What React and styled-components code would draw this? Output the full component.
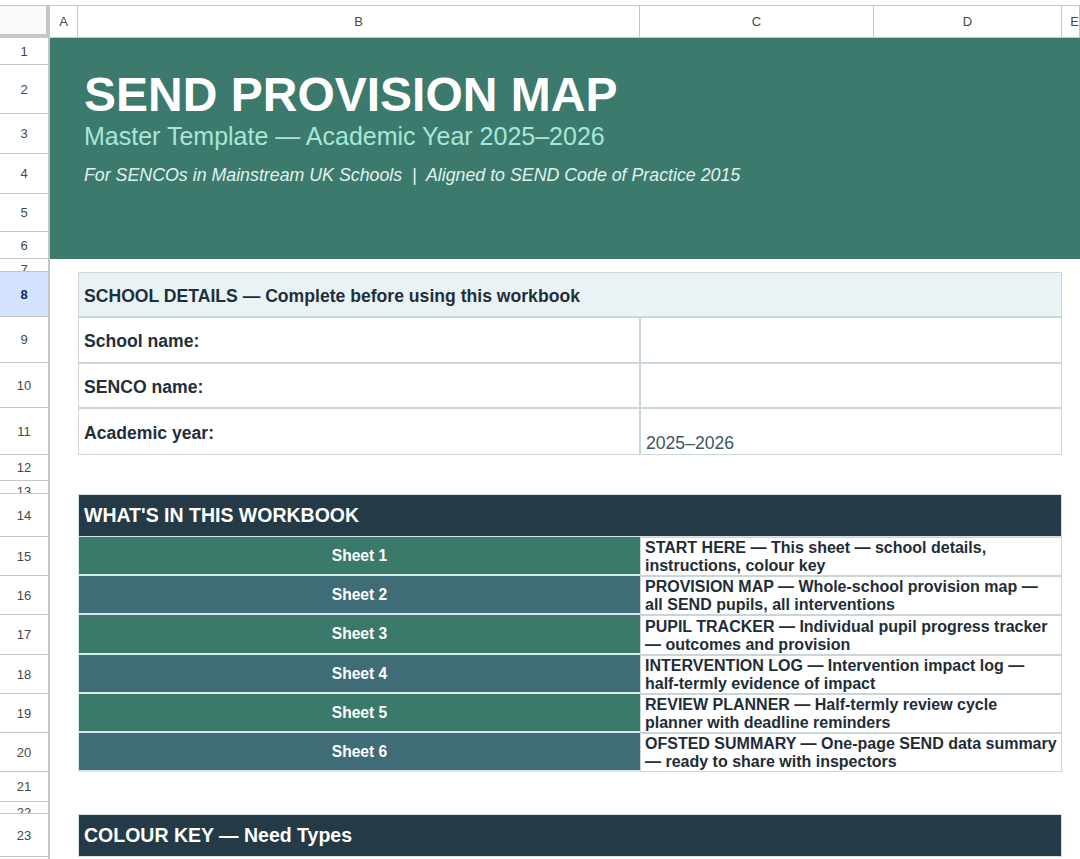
import React from 'react';
import styled, { createGlobalStyle } from 'styled-components';

const GlobalStyle = createGlobalStyle`
    html, body {
        margin: 0;
        padding: 0;
        background: #fff;
        font-family: 'Liberation Sans', Arial, sans-serif;
        overflow: hidden;
    }
`;

const COLS = ['A', 'B', 'C', 'D', 'E'];
const ROW_HEIGHTS = [27, 49, 40, 40, 38, 27, 13, 45, 46, 45, 47, 26, 13, 43, 39, 39, 40, 39, 39, 39, 30, 12, 43, 40];

const Sheet = styled.div`
    display: grid;
    grid-template-columns: 50px 28px 562px 234px 188px 18px;
    grid-template-rows: 32px ${ROW_HEIGHTS.map((h) => `${h}px`).join(' ')};
    margin-top: 5px;
    border-top: 1px solid #c4c7c5;
    width: 1080px;
    height: 853px;
    overflow: hidden;
`;

const Cell = styled.div`
    grid-row: ${(p) => p.$r} / span ${(p) => p.$rs || 1};
    grid-column: ${(p) => p.$c} / span ${(p) => p.$cs || 1};
    display: flex;
    align-items: center;
    min-width: 0;
    box-sizing: border-box;
    overflow: hidden;
`;

const Corner = styled(Cell)`
    background: #f8f9fa;
    border-right: 4px solid #c4c7c5;
    border-bottom: 4px solid #c4c7c5;
`;

const ColHead = styled(Cell)`
    justify-content: center;
    font-size: 13px;
    color: #444746;
    border-right: 1px solid #c4c7c5;
    border-bottom: 1px solid #c4c7c5;
    background: #fff;
    padding-left: ${(p) => (p.$edge ? '8px' : '0')};
`;

const RowHead = styled(Cell)`
    justify-content: center;
    align-items: ${(p) => (p.$tiny ? 'flex-start' : 'center')};
    padding-top: ${(p) => (p.$tiny ? '3px' : '0')};
    font-size: 13px;
    color: ${(p) => (p.$active ? '#0b2a5c' : '#444746')};
    font-weight: ${(p) => (p.$active ? 700 : 400)};
    background: ${(p) => (p.$active ? '#d3e3fd' : '#fff')};
    border-right: 2px solid #c4c7c5;
    border-bottom: 1px solid #c4c7c5;
`;

const Banner = styled(Cell)`
    background: #3b7a6d;
`;

const BannerText = styled(Cell)`
    align-items: flex-start;
    padding: ${(p) => p.$pt || 0}px 0 0 6px;
    line-height: 1;
    white-space: pre;
    overflow: visible;
    z-index: 1;
`;

const Title = styled(BannerText)`
    font-size: 48px;
    font-weight: 700;
    color: #fff;
`;

const Subtitle = styled(BannerText)`
    font-size: 25px;
    color: #a9e6d8;
`;

const Tagline = styled(BannerText)`
    font-size: 17.8px;
    font-style: italic;
    color: #e2f1ee;
`;

const SectionHead = styled(Cell)`
    padding: ${(p) => (p.$dark ? '0' : '3px')} 0 0 5px;
    font-weight: 700;
    font-size: ${(p) => (p.$dark ? '19.5px' : '17.6px')};
    color: ${(p) => (p.$dark ? '#fff' : '#1f2f3a')};
    background: ${(p) => (p.$dark ? '#243a47' : '#e9f3f5')};
    border: 1px solid ${(p) => (p.$dark ? '#d4e3e6' : '#cbd6d9')};
`;

const FieldLabel = styled(Cell)`
    padding: 3px 0 0 5px;
    font-weight: 700;
    font-size: 17.6px;
    color: #1f2f3a;
    border: 1px solid #cbd6d9;
`;

const FieldValue = styled(Cell)`
    align-items: flex-end;
    padding: 0 0 0 5px;
    font-size: 17.6px;
    color: #3d5661;
    border: 1px solid #cbd6d9;
`;

const SheetTag = styled(Cell)`
    justify-content: center;
    font-weight: 700;
    font-size: 15.6px;
    color: #fff;
    background: ${(p) => (p.$alt ? '#3f6c77' : '#3b7a6b')};
    border-bottom: 2px solid #d6eaec;
    border-left: 1px solid #d6eaec;
`;

const SheetDesc = styled(Cell)`
    flex-direction: column;
    align-items: flex-start;
    justify-content: center;
    padding: 1px 0 0 4px;
    font-weight: 700;
    font-size: 16px;
    line-height: 18px;
    color: #1f2d38;
    border: 1px solid #c9d6d9;
    white-space: nowrap;
`;

const DescLine = styled.span`
    display: block;
`;

const SHEETS = [
    ['START HERE — This sheet — school details,', 'instructions, colour key'],
    ['PROVISION MAP — Whole-school provision map —', 'all SEND pupils, all interventions'],
    ['PUPIL TRACKER — Individual pupil progress tracker', '— outcomes and provision'],
    ['INTERVENTION LOG — Intervention impact log —', 'half-termly evidence of impact'],
    ['REVIEW PLANNER — Half-termly review cycle', 'planner with deadline reminders'],
    ['OFSTED SUMMARY — One-page SEND data summary', '— ready to share with inspectors'],
];

const FIELDS = [
    ['School name:', ''],
    ['SENCO name:', ''],
    ['Academic year:', '2025–2026'],
];

const App = () => {
    return (
        <>
            <GlobalStyle />
            <Sheet>
                <Corner $r={1} $c={1} />
                {COLS.map((col, i) => (
                    <ColHead key={col} $r={1} $c={i + 2} $edge={col === 'E'}>
                        {col}
                    </ColHead>
                ))}
                {ROW_HEIGHTS.map((h, i) => (
                    <RowHead key={i} $r={i + 2} $c={1} $tiny={h < 20} $active={i + 1 === 8}>
                        {i + 1}
                    </RowHead>
                ))}

                <Banner $r={2} $rs={6} $c={2} $cs={5} />
                <Title $r={3} $c={3} $cs={4} $pt={6}>SEND PROVISION MAP</Title>
                <Subtitle $r={4} $c={3} $cs={4} $pt={10}>Master Template — Academic Year 2025–2026</Subtitle>
                <Tagline $r={5} $c={3} $cs={4} $pt={13}>
                    {'For SENCOs in Mainstream UK Schools  |  Aligned to SEND Code of Practice 2015'}
                </Tagline>

                <SectionHead $r={9} $c={3} $cs={3}>SCHOOL DETAILS — Complete before using this workbook</SectionHead>
                {FIELDS.map(([label, value], i) => (
                    <React.Fragment key={label}>
                        <FieldLabel $r={10 + i} $c={3}>{label}</FieldLabel>
                        <FieldValue $r={10 + i} $c={4} $cs={2}>{value}</FieldValue>
                    </React.Fragment>
                ))}

                <SectionHead $dark $r={15} $c={3} $cs={3}>WHAT'S IN THIS WORKBOOK</SectionHead>
                {SHEETS.map((lines, i) => (
                    <React.Fragment key={lines[0]}>
                        <SheetTag $r={16 + i} $c={3} $alt={i % 2 === 1}>Sheet {i + 1}</SheetTag>
                        <SheetDesc $r={16 + i} $c={4} $cs={2}>
                            {lines.map((line) => (
                                <DescLine key={line}>{line}</DescLine>
                            ))}
                        </SheetDesc>
                    </React.Fragment>
                ))}

                <SectionHead $dark $r={24} $c={3} $cs={3}>COLOUR KEY — Need Types</SectionHead>
            </Sheet>
        </>
    );
};

export default App;
